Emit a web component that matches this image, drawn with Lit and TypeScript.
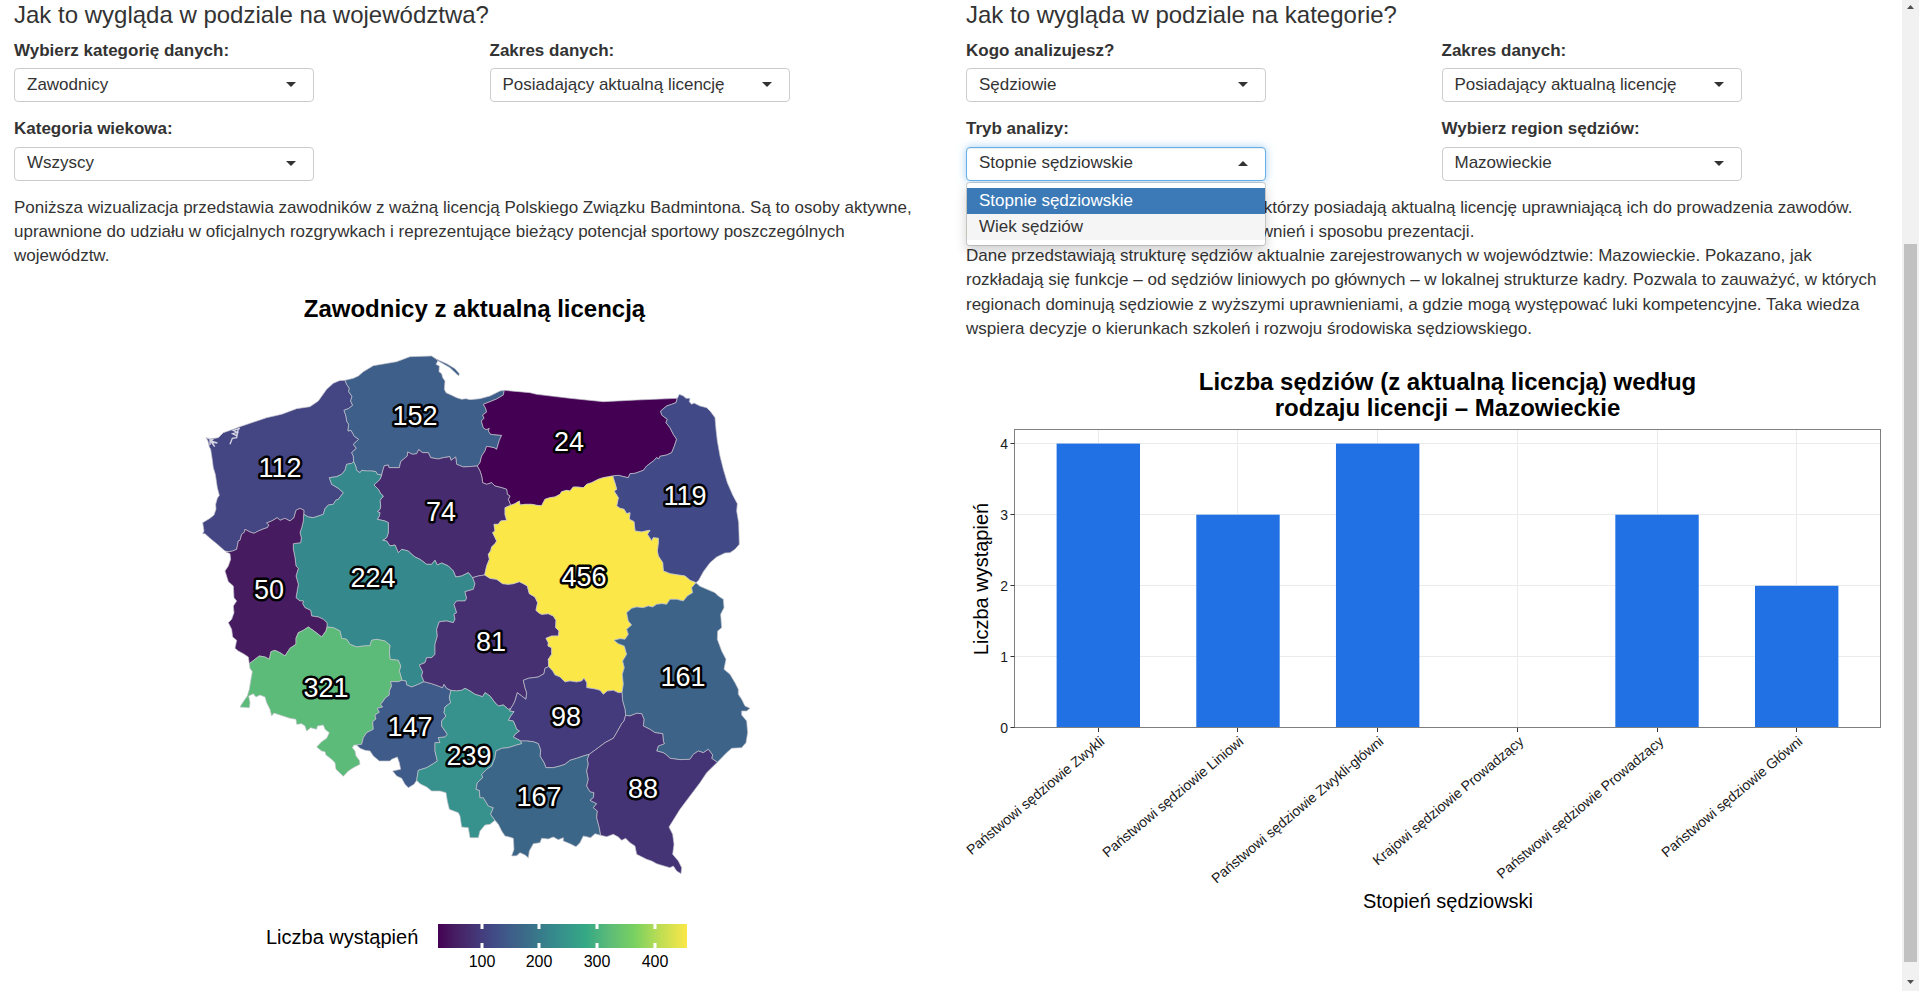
import { LitElement, html, svg, css, nothing } from "lit";
import { customElement, property } from "lit/decorators.js";

/* ---------- map geometry: shared border arcs, drawn once and joined into regions ---------- */

// Each arc is a list of tiles: a tile key and points relative to that tile's origin.
// Units are thirds of a pixel.
const TILES: Record<string, [number, number]> = {
  A: [570, 1020],
  B: [1410, 1020],
  C: [570, 1650],
  D: [1410, 1650],
  E: [1170, 2070],
};

const ARCS: Record<string, [string, string][]> = {
  zachOuter: [["A", "117,632 105,630 80,608 60,592 45,578 38,578 42,570 38,545 60,532 72,522 78,505 77,490 82,472 88,463 82,440 76,400 70,380 66,350 62,325 58,318 54,300 48,290 60,293 75,292 85,290 100,275 130,265 150,257 230,230 275,220 320,203 360,197 385,180 410,145 430,127 448,119 465,118"]],
  zachPom: [["A", "465,118 470,130 478,142 476,152 486,166 482,180 488,193 475,203 462,208 468,225 470,240 476,250 474,270 483,268 490,280 492,285 506,295 490,310 499,322 485,335 490,345 491,362"]],
  pomOuter: [["A", "465,118 490,112 505,105 520,92 550,74 580,69 620,62 660,47 725,45 735,52 745,57 738,70 748,75 747,92 755,98 758,110 765,120 763,145 768,155 785,163 800,170 815,175 828,173"], ["B", "0,176 30,173 60,165 90,150 103,148"]],
  pomWarm: [["B", "103,148 100,162 80,174 60,182 40,190 46,200 50,213 38,222 42,232 34,240 40,260 48,266 58,262 55,270 62,280 95,283 88,298 80,325 72,320 50,316 45,330 35,345 30,365 22,375"]],
  pomKuj: [["A", "575,402 578,390 583,374 595,372 597,380 612,380 628,380 632,362 640,355 652,345 653,333 668,340 680,338 686,326 698,335 715,335 722,350 745,354 760,350 780,347 783,358 797,348 800,370 820,378 850,376 862,375"]],
  pomWlkp: [["A", "491,362 497,375 500,388 510,395 515,388 530,390 545,390 558,392 562,400 575,402"]],
  zachWlkp: [["A", "491,362 485,367 470,370 465,388 455,400 440,407 418,410 425,430 445,442 460,455 445,475 437,478 430,490 415,492 405,503 400,520 385,525 370,530 355,528 341,520"]],
  zachLub: [["A", "341,520 342,508 330,502 318,508 312,530 300,540 285,532 270,538 262,530 245,540 230,546 237,552 232,560 222,563 205,570 192,577 180,573 165,565 163,574 155,580 150,598 145,600 140,625 128,630 117,632"]],
  lubWlkp: [["A", "341,520 340,540 335,560 330,575 334,590 332,605 310,608 310,625"], ["C", "315,20 318,45 325,52 318,75 325,100 318,140 330,150 340,150 338,158 345,170 362,178 365,195 385,198 400,205 411,215 411,228"]],
  lubDolny: [["C", "411,228 408,240 395,258 385,250 372,240 355,228 340,238 325,245 318,262 318,280 300,292 285,315 270,305 255,298 243,302 238,325 225,318 208,315 195,325 178,338"]],
  lubOuter: [["C", "178,338 175,318 160,308 145,300 135,292 140,268 128,258 125,235 115,215 125,205 132,185 130,165 140,150 132,140 130,105 115,92 105,60 115,45 122,25 120,8 108,3 117,2"]],
  dolnyOuter: [["C", "178,338 180,352 187,362 182,390 178,415 172,435 160,452 150,468 178,470 180,455 176,435 190,428 198,438 210,432 225,438 230,455 240,475 245,495 252,486 270,492 300,502 318,505 320,520 335,518 345,525 350,540 362,530 380,535 382,525 400,522 405,535 418,545 410,562 395,572 380,588 395,600 405,602 408,612 425,625 435,635 438,655 460,676 475,660 490,650 500,645 510,640 508,628 498,615 495,600 487,590 492,582 500,582"]],
  wlkpDolny: [["C", "411,228 430,230 450,240 455,262 470,265 480,280 500,288 520,285 540,284 545,268 560,265 585,270 600,283 598,300 600,325 625,328 632,345 628,360 636,388"]],
  dolnyOpol: [["C", "636,388 625,392 602,392 605,405 598,420 598,432 585,442 580,450 572,460 578,468 562,472 568,484 555,492 558,504 548,512 550,535 530,545 520,560 515,580 500,582"]],
  wlkpOpol: [["C", "636,388 648,390 650,402 665,408 685,400 702,392"]],
  lodzOpol: [["C", "702,392 725,398 745,405 757,410 762,400 770,412 783,418"]],
  wlkpLodz: [["C", "702,392 695,375 698,362 688,342 705,335 710,320 725,320 735,310 735,280 742,255 740,235 748,212 770,210 790,215 795,205 792,190 800,185 792,160 800,150 825,150 830,142 825,122 850,115 855,98 848,80"]],
  kujWlkp: [["A", "575,402 570,415 552,432 565,445 572,458 580,465 570,478 572,495 570,505 562,512 570,515 568,525 562,535 585,540 595,545 595,575 590,590 578,598 590,600 600,615 615,612 625,635 635,625 655,630 665,640 675,648 690,655"], ["C", "710,40 725,40 735,28 742,42 755,36 775,45 790,60 797,78 815,75 835,65 848,80"]],
  kujLodz: [["D", "8,80 25,75 44,72"]],
  kujWarm: [["B", "22,375 30,390 35,405 38,425 50,430 65,425 75,435 95,440 110,445 112,460 120,465 115,475 122,493"]],
  kujMaz: [["B", "122,493 105,500 105,520 110,538 92,540 85,550 72,550 75,570 68,575 80,600 75,608 65,618 62,630"], ["D", "55,10 58,25 50,45 44,72"]],
  warmMaz: [["B", "122,493 135,488 148,480 150,492 165,490 185,490 200,493 215,494 225,475 240,470 255,468 270,460 275,452 290,448 300,450 310,438 320,438 340,440 350,430 365,425 385,415 400,410 428,405"]],
  warmPodl: [["B", "428,405 445,403 465,408 475,410 480,398 495,397 520,388 530,375 550,360 560,350 566,354 570,346 590,342 605,335 612,318 620,295 610,280 600,260 588,245 592,235 575,222 572,210 590,195 605,190 618,185 622,172"]],
  warmOuter: [["B", "103,148 180,155 200,160 250,166 300,172 400,182 500,177 622,172"]],
  podlMaz: [["B", "428,405 436,430 440,445 432,450 445,470 440,495 450,502 462,505 470,518 480,515 478,535 492,542 495,570 515,573 528,570 540,568 532,580 545,600 550,590 565,592 565,605 562,630"], ["D", "565,15 578,35 580,60 600,68 625,72 645,75 660,88 678,95"]],
  podlOuter: [["B", "622,172 628,160 640,165 648,172 660,172 658,182 665,190 672,186 690,195 710,200 722,212 735,230 738,265 742,300 750,345 760,385 772,425 788,462 802,488 800,510 806,545 808,610 795,625 780,635 765,636"], ["D", "740,18 720,35 700,62 686,88 678,95"]],
  lodzMaz: [["D", "44,72 60,82 80,85 98,98 115,100 130,98 148,92 160,98 172,105 178,128 195,138 203,155 198,178 207,186 215,190 235,188 250,195 258,208 257,230 267,240 265,255 245,255 228,262 235,275 234,285 245,290 245,310 235,325 236,347"]],
  lodzSwiet: [["D", "236,347 225,352 222,368 205,378 190,380 175,382 160,388 165,410 170,425 168,445 155,435 142,425 135,450 130,460 122,473"]],
  lodzSlask: [["C", "783,418 800,420 815,418 825,412 840,420"], ["D", "15,430 38,437 45,425 60,435 75,455 85,465 100,462 115,475 122,473"]],
  mazSwiet: [["D", "236,347 248,360 255,372 270,378 285,393 300,390 320,393 335,390 342,382 350,395 350,410 375,414 390,418 400,430 412,420 430,418 445,425 456,425"]],
  mazLubel: [["D", "456,425 460,400 457,370 463,350 458,330 470,310 463,285 445,278 432,268 450,263 465,265 475,250 470,235 485,222 475,210 470,185 485,172 500,168 520,170 535,165 548,168 560,160 575,158 590,160 600,145 620,145 640,150 652,135 668,125 665,110 678,95"]],
  swietLubel: [["D", "456,425 458,450 465,475 467,493"]],
  lubelPodk: [["D", "467,493 480,495 500,487 515,488 522,505 520,525 540,535 555,545 578,548 580,570 583,578 565,585 560,600 580,605 590,612 600,622 630,626 660,625 670,610 685,600 700,605 715,595 728,612 725,622 742,634"]],
  lubelOuter: [["D", "678,95 690,106 700,110 735,125 745,135 760,145 762,170 752,190 755,230 743,240 742,265 755,300 768,325 762,355 780,370 795,395 805,415 805,430 815,445 825,465 840,472 830,480 815,480 815,492 830,510 833,545 828,575 815,590 785,592 770,605 742,634"]],
  swietPodk: [["D", "467,493 462,510 455,518 440,545 430,562 405,575 385,590 358,610"]],
  swietMalop: [["D", "358,610 340,615 320,622 300,628 285,640 270,645 250,650 228,650 222,635 210,615 212,598 205,578 190,572 170,570 152,570"]],
  swietSlask: [["D", "122,473 118,480 132,482 122,495 115,508 130,510 140,535 148,540 135,550 130,558 152,570"]],
  slaskMalop: [["D", "152,570 155,578 140,582 115,590 95,592 78,600 75,620 65,645 50,655 35,670 38,680 22,695 18,715 28,718 30,740 40,740 55,765 70,770 62,790 75,808"]],
  malopPodk: [["D", "358,610 352,625 355,640 350,660 355,685 350,705 360,722 372,725 370,740 360,748 380,758 370,770 382,780 380,800 388,830 392,853"]],
  podkOuter: [["D", "742,634 710,665 690,695 660,735 630,775 597,828 608,850 612,880 608,910 625,930 635,950 633,968 620,960 610,945 600,950 572,942 560,938 545,930 530,925 500,910 495,885 480,875 467,862 455,868 445,858 430,850 410,857 392,853"]],
  malopOuter: [["D", "392,853 375,848 362,860 340,855 330,875 318,887 300,878 280,870 280,860 265,866 250,858 235,864 215,862 210,875 190,878 178,900 175,920 165,912 150,905 140,914 125,915 132,895 130,862 118,858 105,855 95,840 85,820 75,808"]],
  slaskOuter: [["E", "315,388 300,400 285,402 270,420 265,440 240,440 235,410 215,408 210,375 205,365 178,355 172,330 168,305 150,300 125,300 110,288 90,278 80,268"]],
  opolSlask: [["E", "183,-2 178,20 182,35 165,48 162,65 168,75 155,90 155,105 172,130 165,138 145,140 150,155 135,155 135,180 142,210 130,218 110,230 85,238 82,255 80,268"]],
  opolOuter: [["E", "80,268 72,280 55,290 45,280 35,262 20,255 8,240 32,235 28,215 22,198 5,205"], ["C", "600,630 585,630 568,630 550,615 540,600 525,598 510,592 500,582"]],
  helSpit: [["A", "738,54 770,68 795,83 808,98 806,105 800,99 780,80 745,60"]],
  lagoonEast: [["A", "150,262 130,268 142,274 128,278 140,284 145,264 140,290 127,292 120,310"]],
  lagoonWest: [["A", "52,291 68,296 62,300 82,306 66,303 74,317 60,298 60,312"]],
};

const arcPoints = (name: string): [number, number][] =>
  ARCS[name].flatMap(([tile, list]) =>
    list.split(" ").map((pair): [number, number] => {
      const [x, y] = pair.split(",").map(Number);
      return [x + TILES[tile][0], y + TILES[tile][1]];
    }),
  );

const toPath = (points: [number, number][]) => "M" + points.map((p) => p.join(" ")).join("L");

// A leading "-" walks the arc backwards.
const regionPath = (ring: string) =>
  toPath(
    ring.split(" ").flatMap((name) =>
      name.startsWith("-") ? arcPoints(name.slice(1)).reverse() : arcPoints(name),
    ),
  ) + "Z";

interface Region {
  name: string;
  value: number;
  fill: string;
  x: number;
  y: number;
  ring: string;
}

const REGIONS: Region[] = [
  { name: "Zachodniopomorskie", value: 112, fill: "#444583", x: 280, y: 476, ring: "zachOuter zachPom zachWlkp zachLub" },
  { name: "Pomorskie", value: 152, fill: "#3e5f8a", x: 415, y: 424, ring: "pomOuter pomWarm -pomKuj -pomWlkp -zachPom" },
  { name: "Warmińsko-mazurskie", value: 24, fill: "#440154", x: 569, y: 450, ring: "warmOuter -warmPodl -warmMaz -kujWarm -pomWarm" },
  { name: "Podlaskie", value: 119, fill: "#414a86", x: 685, y: 504, ring: "podlOuter -podlMaz warmPodl" },
  { name: "Kujawsko-pomorskie", value: 74, fill: "#462c6e", x: 441, y: 520, ring: "pomKuj kujWarm kujMaz -kujLodz -kujWlkp" },
  { name: "Wielkopolskie", value: 224, fill: "#35898c", x: 373, y: 586, ring: "pomWlkp kujWlkp -wlkpLodz -wlkpOpol -wlkpDolny -lubWlkp -zachWlkp" },
  { name: "Lubuskie", value: 50, fill: "#461b60", x: 269, y: 598, ring: "-zachLub lubWlkp lubDolny lubOuter" },
  { name: "Dolnośląskie", value: 321, fill: "#5cbb78", x: 326, y: 696, ring: "-lubDolny wlkpDolny dolnyOpol -dolnyOuter" },
  { name: "Opolskie", value: 147, fill: "#3f5b89", x: 410, y: 735, ring: "wlkpOpol lodzOpol opolSlask opolOuter -dolnyOpol" },
  { name: "Łódzkie", value: 81, fill: "#463072", x: 491, y: 650, ring: "kujLodz lodzMaz lodzSwiet -lodzSlask -lodzOpol wlkpLodz" },
  { name: "Mazowieckie", value: 456, fill: "#fbe748", x: 584, y: 585, ring: "warmMaz podlMaz -mazLubel -mazSwiet -lodzMaz -kujMaz" },
  { name: "Lubelskie", value: 161, fill: "#3d6488", x: 683, y: 685, ring: "lubelOuter -lubelPodk -swietLubel mazLubel" },
  { name: "Świętokrzyskie", value: 98, fill: "#443b7c", x: 566, y: 725, ring: "mazSwiet swietLubel swietPodk swietMalop -swietSlask -lodzSwiet" },
  { name: "Śląskie", value: 239, fill: "#37918c", x: 469, y: 764, ring: "lodzSlask swietSlask slaskMalop slaskOuter -opolSlask" },
  { name: "Małopolskie", value: 167, fill: "#3c6688", x: 539, y: 805, ring: "-swietMalop malopPodk malopOuter -slaskMalop" },
  { name: "Podkarpackie", value: 88, fill: "#453475", x: 643, y: 797, ring: "lubelPodk podkOuter -malopPodk -swietPodk" },
];

const SCALE_MIN = 24;
const SCALE_MAX = 456;
const SCALE_STOPS: [number, string][] = [
  [24, "#440154"], [50, "#461b60"], [74, "#462c6e"], [98, "#443b7c"], [119, "#414a86"],
  [152, "#3e5f8a"], [167, "#3c6688"], [224, "#35898c"], [239, "#37918c"], [280, "#34a885"],
  [321, "#5cbb78"], [365, "#79d161"], [410, "#bfdd53"], [456, "#fbe748"],
];
const scalePos = (v: number) => (v - SCALE_MIN) / (SCALE_MAX - SCALE_MIN);

const chartStyles = css`
  :host {
    display: block;
    color: #000;
    font-family: "Liberation Sans", Arial, sans-serif;
  }
  figure {
    margin: 0;
    padding-top: 28px;
  }
  figcaption {
    font-size: 24px;
    font-weight: 700;
    line-height: 26px;
    text-align: center;
  }
  svg {
    display: block;
    width: 100%;
    height: auto;
    overflow: visible;
  }
  .axis-title {
    font-size: 20px;
  }
`;

@customElement("region-map")
export class RegionMap extends LitElement {
  static styles = [
    chartStyles,
    css`
      .region {
        stroke: #c3c3cb;
        stroke-width: 2;
        stroke-linejoin: round;
      }
      .water {
        fill: none;
        stroke: #d5d5e2;
        stroke-width: 4;
      }
      .value {
        font-size: 27px;
        fill: #fff;
        stroke: #000;
        stroke-width: 5px;
        stroke-linejoin: round;
        paint-order: stroke;
        text-anchor: middle;
      }
      .legend-label {
        font-size: 16px;
        text-anchor: middle;
      }
      .legend-tick {
        stroke: #fff;
        stroke-width: 3;
      }
    `,
  ];

  render() {
    const x0 = 438;
    const width = 249;
    return html`
      <figure>
        <figcaption>Zawodnicy z aktualną licencją</figcaption>
        <svg viewBox="14 321 921 660" role="img" aria-label="Mapa województw">
          <defs>
            <linearGradient id="scale">
              ${SCALE_STOPS.map(([v, c]) => svg`<stop offset=${scalePos(v)} stop-color=${c}></stop>`)}
            </linearGradient>
          </defs>
          <g transform="scale(0.33333)">
            ${REGIONS.map((r) => svg`<path class="region" fill=${r.fill} d=${regionPath(r.ring)}></path>`)}
            <path class="region" fill="#3e5f8a" d=${toPath(arcPoints("helSpit")) + "Z"}></path>
            <path class="water" d=${toPath(arcPoints("lagoonEast"))}></path>
            <path class="water" d=${toPath(arcPoints("lagoonWest"))}></path>
          </g>
          ${REGIONS.map((r) => svg`<text class="value" x=${r.x} y=${r.y}>${r.value}</text>`)}
          <text class="axis-title" x="266" y="943">Liczba wystąpień</text>
          <rect x=${x0} y="923" width=${width} height="24" fill="url(#scale)"></rect>
          ${[100, 200, 300, 400].map((v) => {
            const x = Math.round(x0 + width * scalePos(v));
            return svg`
              <path class="legend-tick" d="M${x} 923v5M${x} 942v5"></path>
              <text class="legend-label" x=${x} y="966">${v}</text>`;
          })}
        </svg>
      </figure>
    `;
  }
}

const GRADES: [string, number][] = [
  ["Państwowi sędziowie Zwykli", 4],
  ["Państwowi sędziowie Liniowi", 3],
  ["Państwowi sędziowie Zwykli-główni", 4],
  ["Krajowi sędziowie Prowadzący", 0],
  ["Państwowi sędziowie Prowadzący", 3],
  ["Państwowi sędziowie Główni", 2],
];

@customElement("grade-chart")
export class GradeChart extends LitElement {
  static styles = [
    chartStyles,
    css`
      figcaption {
        padding-left: 42px;
      }
      .grid {
        stroke: #ebebeb;
      }
      .tick {
        stroke: #333;
      }
      .frame {
        fill: none;
        stroke: #7f7f7f;
      }
      .bar {
        fill: #2171e5;
      }
      .tick-label {
        font-size: 14px;
        text-anchor: end;
        fill: #1a1a1a;
      }
      .middle {
        text-anchor: middle;
      }
    `,
  ];

  render() {
    const left = 1014.5;
    const right = 1880.5;
    const top = 428.5;
    const base = 727;
    const step = (right - left) / 6.2;
    const cx = (i: number) => left + step * (i + 0.6);
    const cy = (v: number) => base - v * 71.1;
    const crisp = (v: number) => Math.floor(v) + 0.5;
    return html`
      <figure>
        <figcaption>
          Liczba sędziów (z aktualną licencją) według<br />rodzaju licencji – Mazowieckie
        </figcaption>
        <svg viewBox="966 420 921 510" role="img" aria-label="Liczba sędziów według rodzaju licencji">
          ${[1, 2, 3, 4].map((v) => svg`<path class="grid" d="M${left} ${crisp(cy(v))}H${right}"></path>`)}
          ${GRADES.map((_, i) => svg`<path class="grid" d="M${crisp(cx(i))} ${top}V${base}"></path>`)}
          ${GRADES.map(([, n], i) =>
            n ? svg`<rect class="bar" x=${cx(i) - 41.7} y=${cy(n)} width="83.4" height=${base - cy(n)}></rect>` : nothing,
          )}
          <rect class="frame" x=${left} y=${top} width=${right - left} height="298"></rect>
          ${[0, 1, 2, 3, 4].map(
            (v) => svg`
              <path class="tick" d="M${left - 4} ${crisp(cy(v) - 0.5)}H${left}"></path>
              <text class="tick-label" x="1008" y=${Math.round(cy(v)) + 5}>${v}</text>`,
          )}
          ${GRADES.map(([name], i) => {
            const x = crisp(cx(i));
            return svg`
              <path class="tick" d="M${x} ${base}v4"></path>
              <text class="tick-label" transform="translate(${x + 7} 742) rotate(-40)">${name}</text>`;
          })}
          <text class="axis-title middle" transform="translate(988 578) rotate(-90)">Liczba wystąpień</text>
          <text class="axis-title middle" x="1448" y="907">Stopień sędziowski</text>
        </svg>
      </figure>
    `;
  }
}

@customElement("select-field")
export class SelectField extends LitElement {
  static styles = css`
    :host {
      display: block;
      min-width: 0;
      margin-bottom: 15px;
    }
    label {
      display: block;
      margin-bottom: 5px;
      font-weight: 700;
    }
    .control {
      position: relative;
      max-width: 300px;
    }
    select {
      display: block;
      box-sizing: border-box;
      width: 100%;
      height: 34px;
      margin: 0;
      padding: 0 30px 0 12px;
      border: 1px solid #ccc;
      border-radius: 4px;
      background: #fff;
      color: #333;
      font: inherit;
      appearance: none;
      outline: none;
    }
    .open select {
      border-color: #66afe9;
      box-shadow: inset 0 1px 1px rgba(0, 0, 0, 0.075), 0 0 8px rgba(102, 175, 233, 0.6);
    }
    .caret {
      position: absolute;
      top: 14px;
      right: 18px;
      width: 10px;
      height: 5px;
      fill: #333;
      pointer-events: none;
    }
    .menu {
      position: absolute;
      z-index: 2;
      top: 35px;
      left: 0;
      right: 0;
      margin: 0;
      padding: 5px 0;
      border: 1px solid rgba(0, 0, 0, 0.15);
      border-radius: 4px;
      background: #fff;
      background-clip: padding-box;
      box-shadow: 0 6px 12px rgba(0, 0, 0, 0.175);
      list-style: none;
    }
    .option {
      padding: 3px 12px;
      background: #f5f5f5;
      line-height: 20px;
    }
    .option.active {
      background: #3b7ab7;
      color: #fff;
    }
  `;

  @property() label = "";
  @property({ type: Array }) options: string[] = [];
  @property({ type: Boolean }) open = false;

  render() {
    return html`
      <label for="field">${this.label}</label>
      <div class="control ${this.open ? "open" : ""}">
        <select id="field">
          ${this.options.map((o) => html`<option>${o}</option>`)}
        </select>
        <svg class="caret" viewBox="0 0 10 5" aria-hidden="true">
          <path d=${this.open ? "M0 5L5 0L10 5Z" : "M0 0H10L5 5Z"}></path>
        </svg>
        ${this.open
          ? html`<ul class="menu" role="listbox">
              ${this.options.map(
                (o, i) => html`<li class="option ${i === 0 ? "active" : ""}" role="option" aria-selected=${i === 0}>${o}</li>`,
              )}
            </ul>`
          : nothing}
      </div>
    `;
  }
}

@customElement("app-root")
export class AppRoot extends LitElement {
  static styles = css`
    :host {
      display: flex;
      height: 100vh;
      overflow: hidden;
      background: #fff;
      color: #333;
      font-family: "Liberation Sans", Arial, sans-serif;
      font-size: 17px;
      line-height: 1.43;
    }
    main {
      flex: 1;
      min-width: 0;
      display: grid;
      grid-template-columns: 1fr 1fr;
      gap: 31px;
      padding: 1px 15px 0 14px;
    }
    section {
      min-width: 0;
    }
    h3 {
      margin: 0 0 10px;
      font-size: 24px;
      font-weight: 400;
      line-height: 28px;
    }
    .filters {
      display: grid;
      grid-template-columns: 1fr 1fr;
      column-gap: 30px;
    }
    p {
      margin: 0;
    }
    .scrollbar {
      flex: none;
      display: flex;
      flex-direction: column;
      align-items: center;
      justify-content: space-between;
      width: 17px;
      background: #f1f1f1;
    }
    .arrow {
      width: 17px;
      height: 17px;
      fill: #505050;
    }
    .rail {
      flex: 1;
      display: flex;
      flex-direction: column;
      justify-content: flex-end;
      padding-bottom: 12px;
    }
    .thumb {
      width: 13px;
      height: 76%;
      background: #c1c1c1;
    }
  `;

  render() {
    return html`
      <main>
        <section>
          <h3>Jak to wygląda w podziale na województwa?</h3>
          <div class="filters">
            <select-field label="Wybierz kategorię danych:" .options=${["Zawodnicy"]}></select-field>
            <select-field label="Zakres danych:" .options=${["Posiadający aktualną licencję"]}></select-field>
            <select-field label="Kategoria wiekowa:" .options=${["Wszyscy"]}></select-field>
          </div>
          <p>
            Poniższa wizualizacja przedstawia zawodników z ważną licencją Polskiego Związku Badmintona. Są to osoby
            aktywne, uprawnione do udziału w oficjalnych rozgrywkach i reprezentujące bieżący potencjał sportowy
            poszczególnych województw.
          </p>
          <region-map></region-map>
        </section>
        <section>
          <h3>Jak to wygląda w podziale na kategorie?</h3>
          <div class="filters">
            <select-field label="Kogo analizujesz?" .options=${["Sędziowie"]}></select-field>
            <select-field label="Zakres danych:" .options=${["Posiadający aktualną licencję"]}></select-field>
            <select-field label="Tryb analizy:" open .options=${["Stopnie sędziowskie", "Wiek sędziów"]}></select-field>
            <select-field label="Wybierz region sędziów:" .options=${["Mazowieckie"]}></select-field>
          </div>
          <p>
            Poniższa analiza przedstawia sędziów, którzy posiadają aktualną licencję uprawniającą ich do prowadzenia
            zawodów. Możliwy jest także wybór poziomu uprawnień i sposobu prezentacji.<br />
            Dane przedstawiają strukturę sędziów aktualnie zarejestrowanych w województwie: Mazowieckie. Pokazano, jak
            rozkładają się funkcje – od sędziów liniowych po głównych – w lokalnej strukturze kadry. Pozwala to
            zauważyć, w których regionach dominują sędziowie z wyższymi uprawnieniami, a gdzie mogą występować luki
            kompetencyjne. Taka wiedza wspiera decyzje o kierunkach szkoleń i rozwoju środowiska sędziowskiego.
          </p>
          <grade-chart></grade-chart>
        </section>
      </main>
      <div class="scrollbar" aria-hidden="true">
        <svg class="arrow" viewBox="0 0 17 17"><path d="M5 9L8.500 5L12 9Z"></path></svg>
        <div class="rail"><div class="thumb"></div></div>
        <svg class="arrow" viewBox="0 0 17 17"><path d="M5 6L8.500 10L12 6Z"></path></svg>
      </div>
    `;
  }
}
